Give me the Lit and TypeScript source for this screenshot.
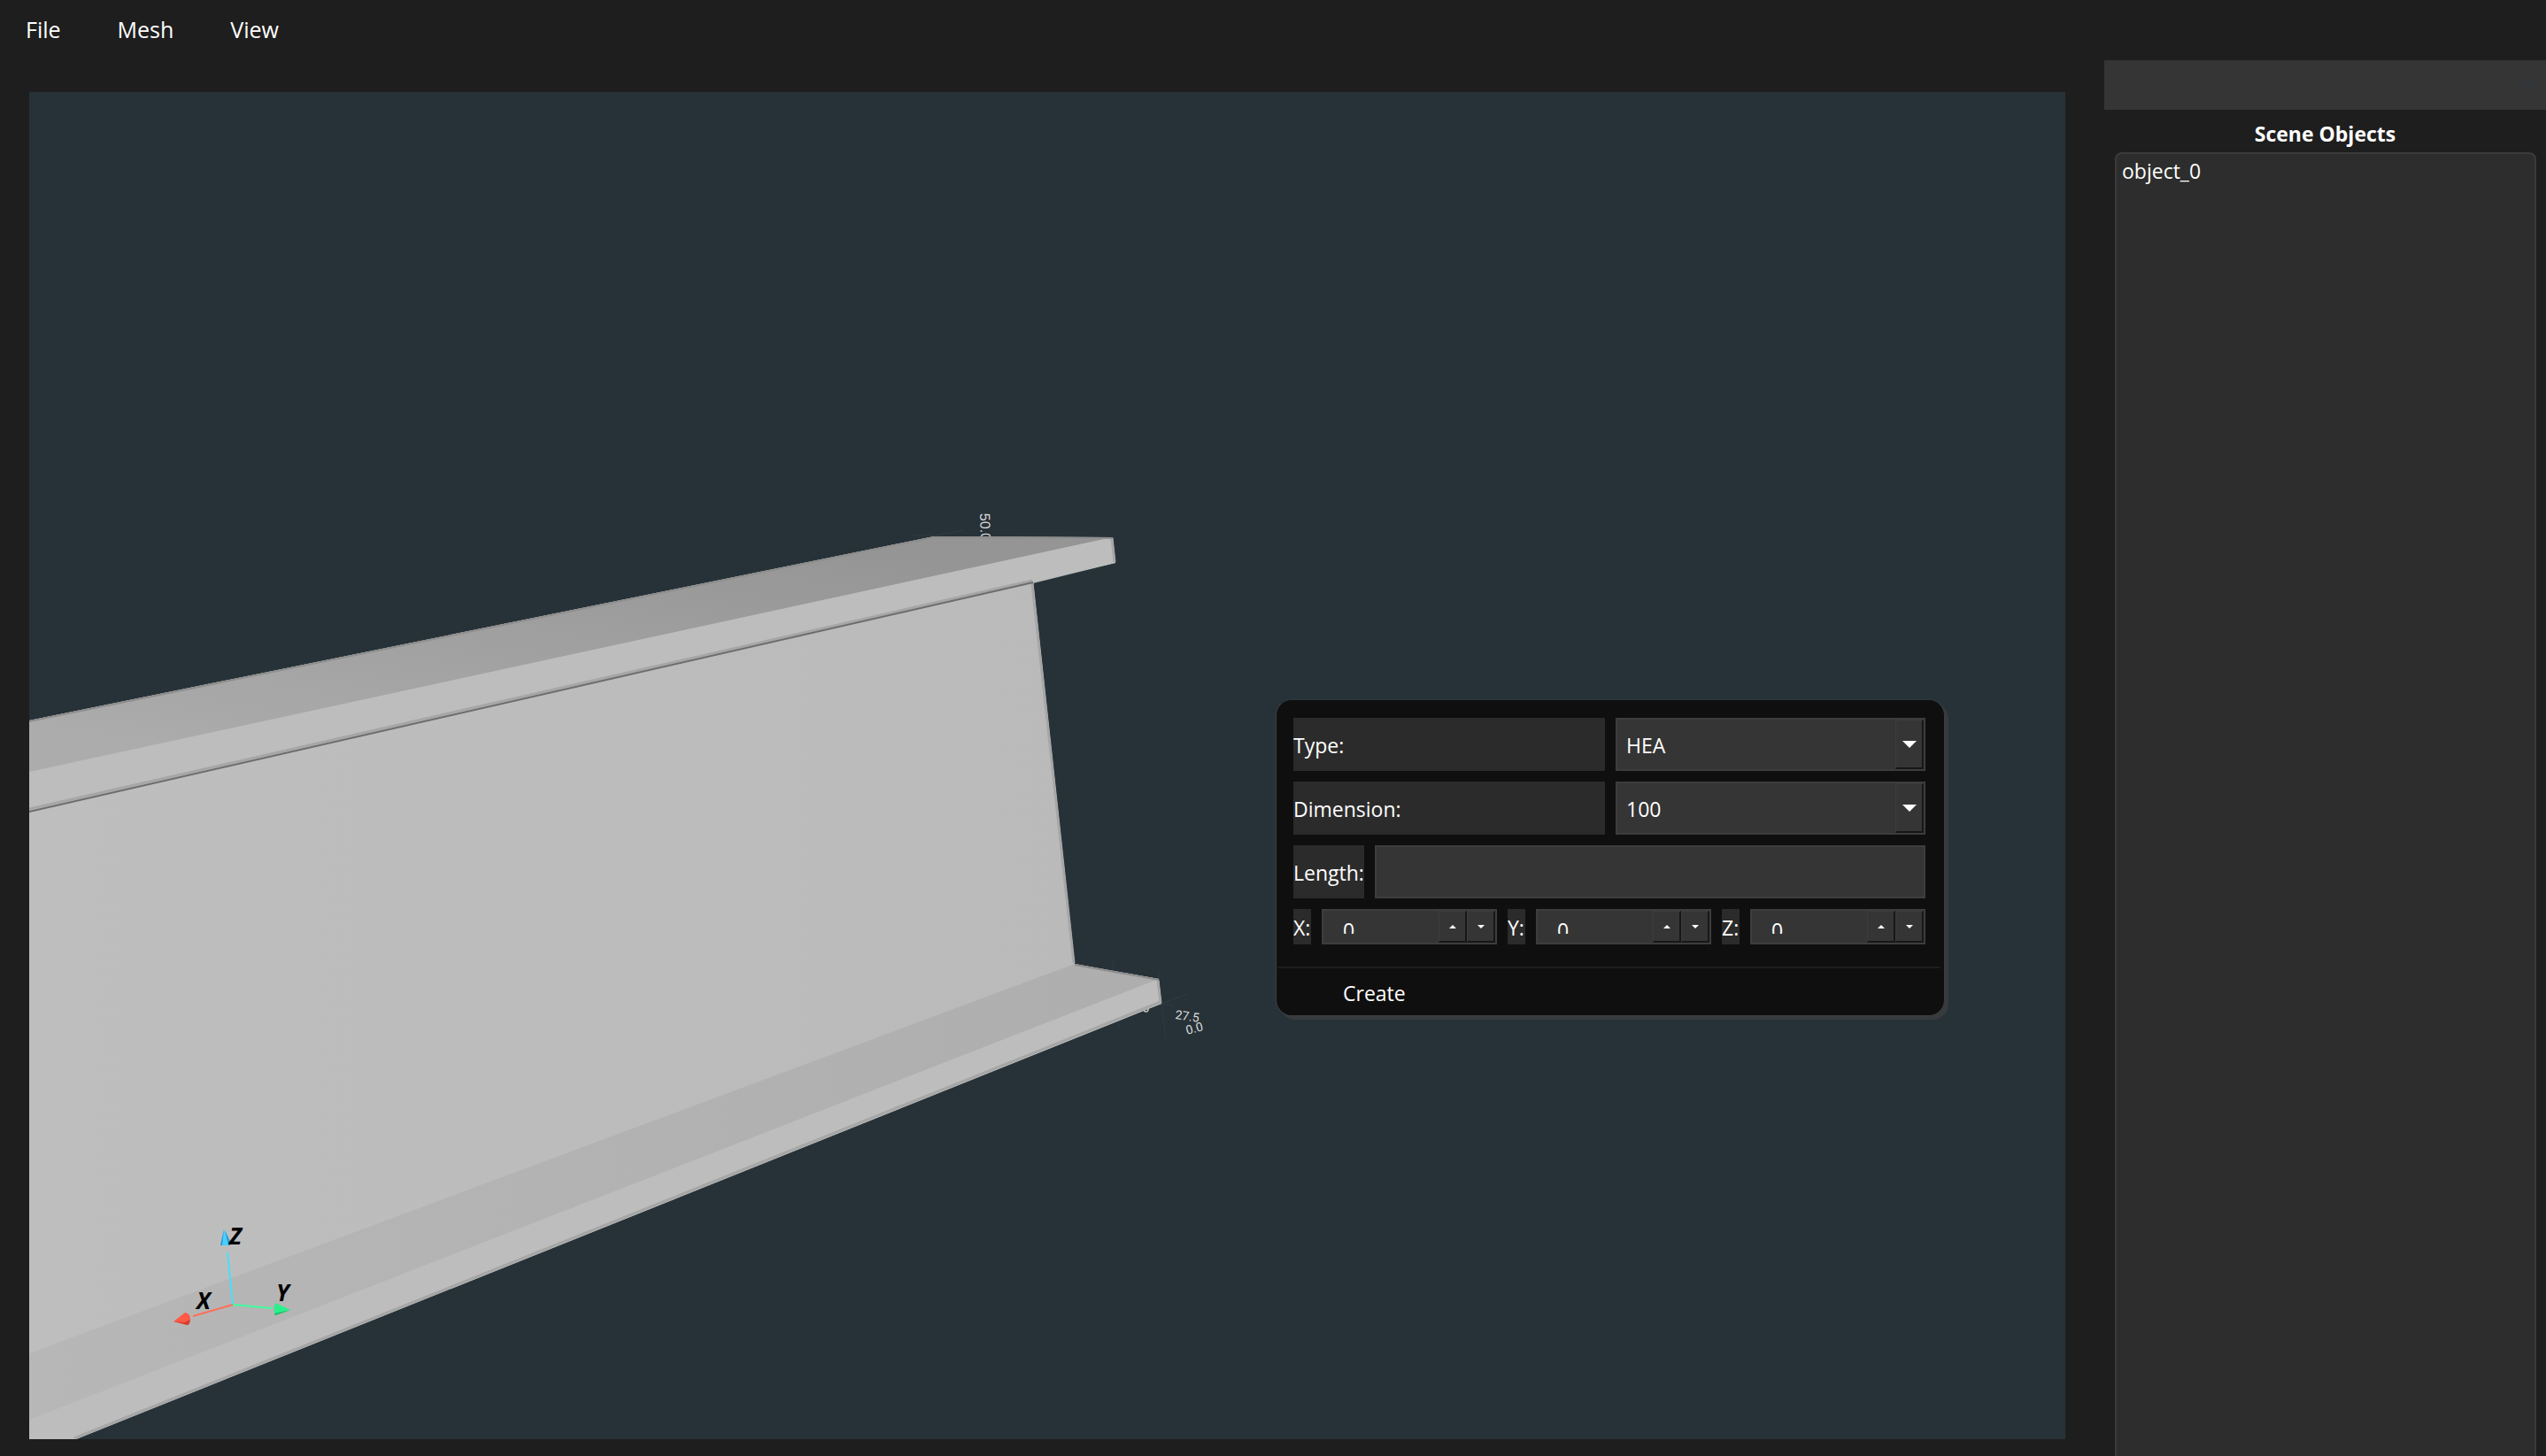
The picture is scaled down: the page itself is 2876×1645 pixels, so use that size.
import { LitElement, html, css } from "lit";
import { customElement, state } from "lit/decorators.js";

const FONT = css`"Open Sans", "Noto Sans", sans-serif`;

/** 3D canvas: I-beam, dimension labels and the orientation marker. */
@customElement("scene-view")
export class SceneView extends LitElement {
  static styles = css`
    :host { display: block; height: 100%; }
    svg { display: block; width: 100%; height: 100%; }
    .dim { font-family: "Liberation Sans", sans-serif; font-size: 16px; fill: #dcdcdc; }
    .small { font-family: Roboto, sans-serif; font-size: 14px; }
    .axis { font-family: ${FONT}; font-size: 26px; font-weight: 700; font-style: italic; fill: #000; }
  `;

  render() {
    return html`
      <svg viewBox="33 104 2300 1522" preserveAspectRatio="xMinYMin slice" role="img" aria-label="Beam">
        <defs>
          <linearGradient id="top" gradientUnits="userSpaceOnUse" x1="520" y1="1150" x2="620" y2="560">
            <stop offset=".4" stop-color="#acacac" />
            <stop offset=".7" stop-color="#a1a1a1" />
            <stop offset="1" stop-color="#959595" />
          </linearGradient>
          <linearGradient id="web" gradientUnits="userSpaceOnUse" x1="33" y1="0" x2="1214" y2="0">
            <stop offset="0" stop-color="#bebebe" />
            <stop offset="1" stop-color="#bababa" />
          </linearGradient>
          <linearGradient id="foot" gradientUnits="userSpaceOnUse" x1="33" y1="0" x2="1300" y2="0">
            <stop offset="0" stop-color="#b7b7b7" />
            <stop offset="1" stop-color="#aeaeae" />
          </linearGradient>
        </defs>
        <path stroke="#303b41" d="M1032 605h30M1058 605l30-6M1257 1086v10M1309 1096v10M1312 1134l29-11M1312 1134l15 3M1312 1134l5 40M1264 1152v11" />
        <text class="dim" transform="translate(1107 580) rotate(88)">50.0</text>
        <text class="dim small" transform="translate(1291 1144) rotate(-8)">0</text>
        <text class="dim small" transform="translate(1327 1151) rotate(8)">27.5</text>
        <text class="dim small" transform="translate(1341 1169) rotate(-15)">0.0</text>
        <path fill="#b9b9b9" d="M33 814L1055 606L1257 607L1260 636L1167 659L1214 1089L1309 1106L1312 1134L86 1626H33Z" />
        <path fill="url(#top)" d="M33 814L1055 606L1257 607L33 873Z" />
        <path fill="url(#web)" d="M33 915L1167 657L1214 1089L33 1530Z" />
        <path fill="#bdbdbd" d="M33 872L1257 607L1260 636L33 917Z" />
        <path fill="url(#foot)" d="M33 1529L1214 1089L1309 1106L33 1605Z" />
        <path fill="#bdbdbd" d="M33 1604L1309 1106L1312 1134L86 1626H33Z" />
        <g fill="none">
          <path stroke="#a6a6a6" stroke-width="3" d="M33 914L1166 656M1166 659L1213 1088M1256 608L1259 635M1308 1108L1311 1133M1311 1132L84 1625" />
          <path stroke="#8e8e8e" stroke-width="2" d="M33 815L1055 607L1257 608M1214 1090L1309 1107" />
          <path stroke="#6c6c6c" stroke-width="2" d="M33 917L1167 658" />
        </g>
        <g stroke-width="2" fill="none">
          <path stroke="#45e0ff" d="M257 1415L263 1474" />
          <path stroke="#ff6f56" d="M263 1474L218 1487" />
          <path stroke="#3dffa0" d="M263 1474L307 1478" />
        </g>
        <path fill="#49d0ff" d="M253 1389L249 1407H260V1403Z" />
        <path fill="#2b93d4" d="M253 1389L249 1407H251Z" />
        <path fill="#2b93d4" d="M254 1390L260 1403V1407H258Z" />
        <path fill="#ff5a45" d="M196 1493L209 1483Q215 1484 215 1490Q214 1497 211 1497Z" />
        <path fill="#d2402f" d="M196 1493L208 1494L215 1491Q214 1497 212 1497Z" />
        <path fill="#2bf08a" d="M328 1480L311 1472Q308 1479 311 1486Z" />
        <path fill="#1fb365" d="M328 1480L311 1486L310 1484Z" />
        <text class="axis" x="259" y="1406">Z</text>
        <text class="axis" x="222" y="1479">X</text>
        <text class="axis" x="312" y="1470">Y</text>
      </svg>
    `;
  }
}

/** Floating window with the profile parameters. */
@customElement("beam-dialog")
export class BeamDialog extends LitElement {
  static styles = css`
    * { box-sizing: border-box; }
    :host { display: block; font: 23px/32px ${FONT}; color: #fff; }
    .window {
      background: #0f0f0f;
      border: 1px solid #3a3f42;
      border-top-color: #2b3940;
      border-radius: 18px;
      box-shadow: 4px 4px 0 #383b3e;
    }
    form { display: block; }
    .fields { display: grid; gap: 12px; padding: 20px 21px 25px 19px; }
    .row { display: flex; gap: 12px; height: 60px; }
    .row.short { height: 40px; }
    label { background: #2b2b2b; display: flex; align-items: center; padding-top: 2px; }
    .half { flex: 1; }
    .pick { width: 350px; position: relative; display: flex; }
    select, input {
      font: inherit; color: inherit; background: #353535; border: 2px solid #3d3d3d;
      border-radius: 0; appearance: none; outline: none; margin: 0; min-width: 0;
    }
    select { width: 100%; padding: 2px 40px 0 10px; }
    .length { width: 80px; }
    .grow { flex: 1; }
    .tab {
      position: absolute; right: 2px; top: 2px; bottom: 2px; width: 32px; pointer-events: none;
      display: grid; place-items: center; background: #353535;
      border: 1px solid #3d3d3d; border-right: 2px solid #171717; border-bottom: 2px solid #171717;
    }
    svg { display: block; fill: #fff; }
    .axis { width: 20px; overflow: hidden; }
    .spin { flex: 1; display: flex; min-width: 0; background: #353535; border: 2px solid #3d3d3d; }
    .spin input {
      flex: 1; width: 0; border: 0; background: none; padding: 8px 0 0 22px;
      clip-path: inset(0 0 10px 0); appearance: textfield;
    }
    .spin input::-webkit-inner-spin-button { display: none; }
    .step {
      width: 32px; padding: 0; display: grid; place-items: center; background: #353535;
      border: 1px solid #3d3d3d; border-right: 2px solid #171717; border-bottom: 2px solid #171717;
    }
    .actions { border-top: 2px solid #1e1e1e; margin: 0 4px 0 1px; height: 55px; }
    .create {
      display: block; font: inherit; color: inherit; background: none; border: 0; width: 100%;
      padding: 12px 0 0 74px; text-align: left;
    }
  `;

  @state() private origin: Record<string, number> = { X: 0, Y: 0, Z: 0 };

  private step(axis: string, by: number) {
    this.origin = { ...this.origin, [axis]: this.origin[axis] + by };
  }

  private caret() {
    return html`<span class="tab"><svg width="16" height="8" viewBox="0 0 16 8"><path d="M0 0H16L8 8Z" /></svg></span>`;
  }

  private axisField(axis: string) {
    return html`
      <label class="axis" for=${axis}>${axis}:</label>
      <span class="spin">
        <input id=${axis} type="number" .value=${String(this.origin[axis])} />
        <button class="step" type="button" aria-label="Increase ${axis}" @click=${() => this.step(axis, 1)}>
          <svg width="8" height="4" viewBox="0 0 8 4"><path d="M0 4H8L4 0Z" /></svg>
        </button>
        <button class="step" type="button" aria-label="Decrease ${axis}" @click=${() => this.step(axis, -1)}>
          <svg width="8" height="4" viewBox="0 0 8 4"><path d="M0 0H8L4 4Z" /></svg>
        </button>
      </span>
    `;
  }

  render() {
    return html`
      <form class="window" @submit=${(e: Event) => e.preventDefault()}>
        <div class="fields">
          <div class="row">
            <label class="half" for="type">Type:</label>
            <span class="pick"><select id="type"><option>HEA</option></select>${this.caret()}</span>
          </div>
          <div class="row">
            <label class="half" for="dimension">Dimension:</label>
            <span class="pick"><select id="dimension"><option>100</option></select>${this.caret()}</span>
          </div>
          <div class="row">
            <label class="length" for="length">Length:</label>
            <input class="grow" id="length" type="text" />
          </div>
          <div class="row short">${["X", "Y", "Z"].map((a) => this.axisField(a))}</div>
        </div>
        <div class="actions"><button class="create" type="submit">Create</button></div>
      </form>
    `;
  }
}

@customElement("app-root")
export class AppRoot extends LitElement {
  static styles = css`
    * { box-sizing: border-box; }
    :host {
      display: grid; grid-template-rows: 68px 1fr; height: 100vh; overflow: hidden;
      background: #1e1e1e; color: #fff; font: 23px/32px ${FONT};
    }
    nav { display: flex; align-items: center; gap: 64px; padding: 0 0 2px 29px; }
    nav button { font: inherit; font-size: 25px; color: inherit; background: none; border: 0; padding: 0; }
    .body { display: grid; grid-template-columns: 1fr 499px; gap: 44px; min-height: 0; }
    .canvas { position: relative; margin: 36px 0 19px 33px; background: #273238; min-height: 0; }
    .dialog { position: absolute; left: 1408px; top: 686px; width: 756px; }
    aside { display: flex; flex-direction: column; min-height: 0; }
    .titlebar { height: 56px; background: #353535; display: flex; align-items: center; justify-content: flex-end; padding-right: 12px; }
    .float { background: none; border: 0; padding: 0; height: 18px; }
    .float svg { display: block; }
    h2 { font-size: 23px; line-height: 32px; margin: 11px 0 5px; text-align: center; }
    ul {
      flex: 1; list-style: none; margin: 0 11px 0 12px; padding: 3px 6px; background: #2d2d2d;
      border: 2px solid #3b3b3b; border-bottom: 0; border-radius: 8px 8px 0 0;
    }
  `;

  render() {
    return html`
      <nav>${["File", "Mesh", "View"].map((m) => html`<button type="button">${m}</button>`)}</nav>
      <div class="body">
        <main class="canvas">
          <scene-view></scene-view>
          <beam-dialog class="dialog"></beam-dialog>
        </main>
        <aside>
          <div class="titlebar">
            <button class="float" type="button" aria-label="Float panel">
              <svg width="16" height="18" viewBox="0 0 16 18" fill="none" stroke="#32363a" stroke-width="2"><path d="M6 5V1H15V11H11M1 6H10V17H1Z" /></svg>
            </button>
          </div>
          <h2>Scene Objects</h2>
          <ul><li>object_0</li></ul>
        </aside>
      </div>
    `;
  }
}
